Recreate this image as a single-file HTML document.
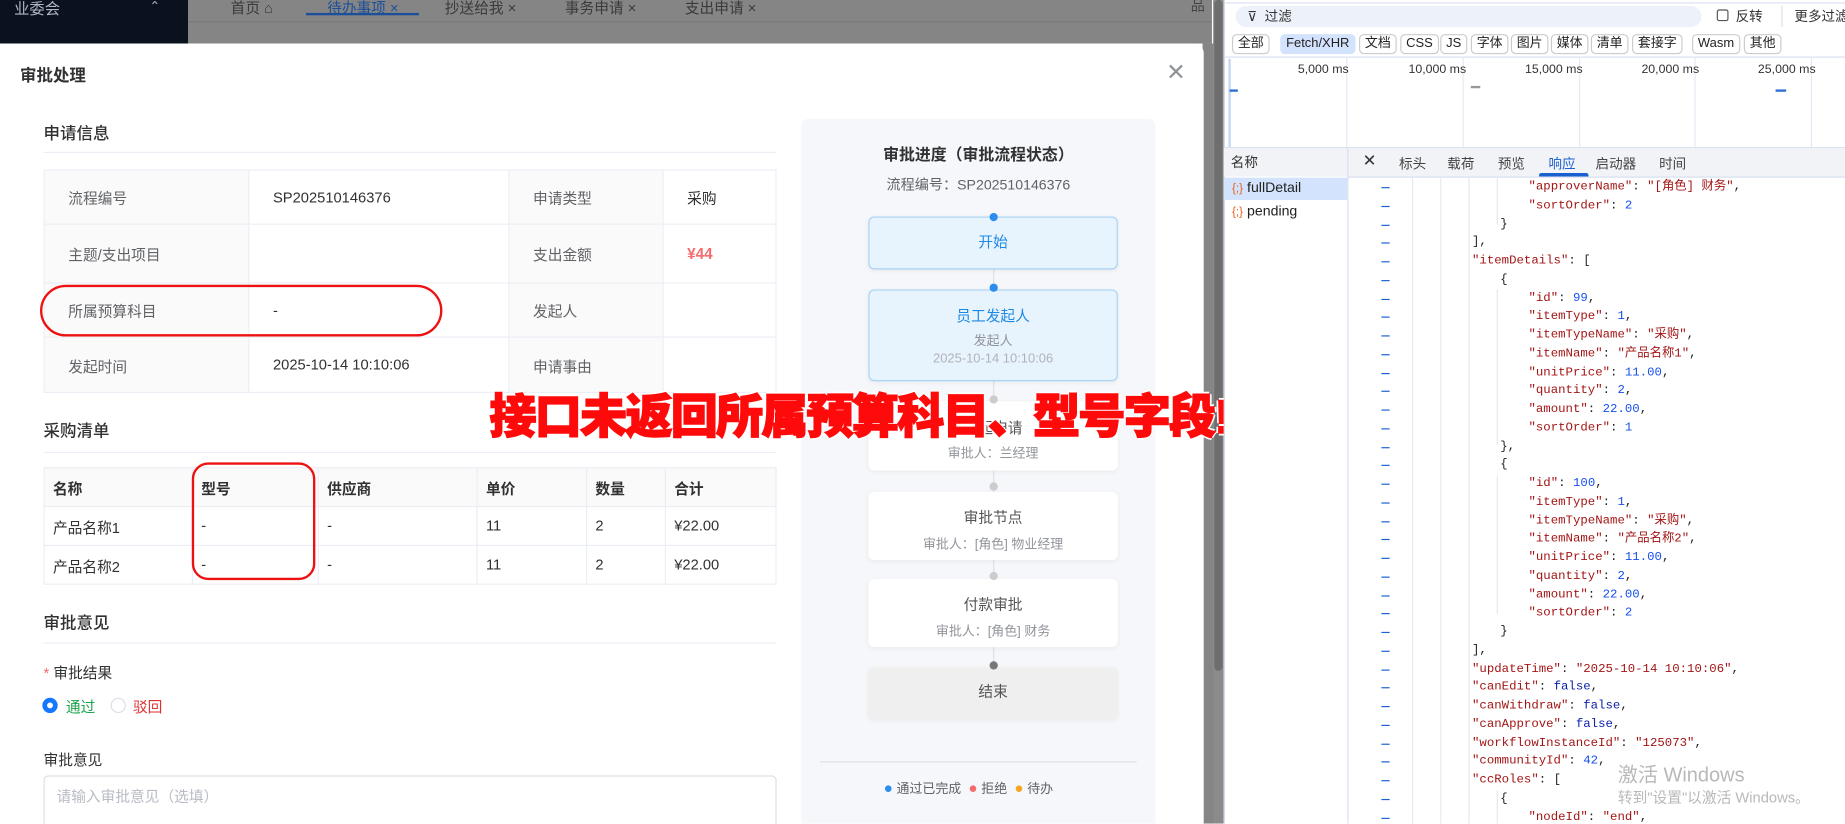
<!DOCTYPE html>
<html><head><meta charset="utf-8">
<style>
*{margin:0;padding:0;box-sizing:border-box}
html,body{width:1845px;height:824px;overflow:hidden;background:#fff}
#r{position:absolute;left:0;top:0;width:1568px;height:700px;transform:scale(1.17666);transform-origin:0 0;font-family:"Liberation Sans","Noto Sans CJK SC",sans-serif;color:#303133;font-size:13px;overflow:hidden}
.a{position:absolute;white-space:nowrap}
.t{font-size:14px;font-weight:500;color:#303133}
.hl{position:absolute;height:1px;background:#ebeef5}
table{border-collapse:collapse;position:absolute;font-size:12.5px}
td{border:1px solid #ebeef5;padding:0 0 0 20px;color:#303133}
td.l{background:#fafafa;color:#606266}
.tb td{padding-left:7px}
.node{position:absolute;left:738px;width:212px;background:#fff;border-radius:5px;text-align:center;box-shadow:0 1px 4px rgba(0,0,0,.06)}
.dot{position:absolute;left:841px;width:7px;height:7px;border-radius:50%;background:#ccc}
.js{position:absolute;left:1160px;font-family:"Liberation Mono","Noto Sans CJK SC",monospace;font-size:10.5px;line-height:14px;height:14px;color:#222}
.k{color:#a31515}.n{color:#1750eb}.b{color:#0d22aa}
.ln{position:absolute;left:1174px;width:7px;height:1px;background:#1a5fd0}
.btn{position:absolute;top:29px;height:17px;border:1px solid #ccc;border-radius:4px;font-size:11px;padding:0 4px;line-height:15px;color:#222}
</style></head><body><div id="r">
<div class="a" style="left:0;top:0;width:160px;height:37px;background:#0a1220"></div>
<div class="a" style="left:12px;top:-3px;color:#b0b6c0;font-size:13px">业委会</div>
<div class="a" style="left:127px;top:-1px;color:#aaa;font-size:11px">⌃</div>
<div class="a" style="left:160px;top:0;width:870px;height:37px;background:#858585"></div>
<div class="a" style="left:160px;top:18px;width:870px;height:1px;background:#7a7a7a"></div>
<div class="a" style="left:196px;top:-4px;color:#3a3a3a;font-size:12.5px">首页 ⌂</div>
<div class="a" style="left:278px;top:-4px;color:#1b4f9a;font-size:12.5px">待办事项 ×</div>
<div class="a" style="left:260px;top:11px;width:96px;height:2px;background:#1b4f9a"></div>
<div class="a" style="left:378px;top:-4px;color:#3a3a3a;font-size:12.5px">抄送给我 ×</div>
<div class="a" style="left:480px;top:-4px;color:#3a3a3a;font-size:12.5px">事务申请 ×</div>
<div class="a" style="left:582px;top:-4px;color:#3a3a3a;font-size:12.5px">支出申请 ×</div>
<div class="a" style="left:1012px;top:-4px;color:#444;font-size:12px">品</div>
<div class="a" style="left:1022px;top:37px;width:10px;height:663px;background:#858585"></div>
<div class="a" style="left:1031px;top:0;width:9px;height:700px;background:#8b8b8b"></div>
<div class="a" style="left:1032px;top:0;width:7px;height:570px;background:#6e6e6e;border-radius:4px"></div>
<div class="a" style="left:0;top:37px;width:1023px;height:663px;background:#fff;border-radius:0 8px 0 0"></div>
<div class="a" style="left:17px;top:54px;font-size:14px;font-weight:bold">审批处理</div>
<div class="a" style="left:991px;top:49px;font-size:20px;color:#909399;font-weight:300">✕</div>
<div class="a t" style="left:37px;top:103px">申请信息</div>
<div class="hl" style="left:37px;top:129px;width:623px"></div>
<table style="left:37px;top:144px;width:623px;height:189px">
<tr style="height:46px"><td class="l" style="width:174px">流程编号</td><td style="width:221px">SP202510146376</td><td class="l" style="width:131px">申请类型</td><td>采购</td></tr>
<tr style="height:50px"><td class="l">主题/支出项目</td><td></td><td class="l">支出金额</td><td style="color:#f56c6c;font-weight:bold;font-size:13px">¥44</td></tr>
<tr style="height:46px"><td class="l">所属预算科目</td><td>-</td><td class="l">发起人</td><td></td></tr>
<tr style="height:47px"><td class="l">发起时间</td><td>2025-10-14 10:10:06</td><td class="l">申请事由</td><td></td></tr>
</table>
<div class="a" style="left:34px;top:242px;width:342px;height:44px;border:2px solid #ee1111;border-radius:22px"></div>
<div class="a t" style="left:37px;top:356px">采购清单</div>
<div class="hl" style="left:37px;top:384px;width:623px"></div>
<table class="tb" style="left:37px;top:397px;width:623px;height:99px">
<tr style="height:33px;font-weight:bold;background:#fafafa"><td style="width:126px">名称</td><td style="width:107px">型号</td><td style="width:135px">供应商</td><td style="width:93px">单价</td><td style="width:67px">数量</td><td>合计</td></tr>
<tr style="height:33px"><td>产品名称1</td><td>-</td><td>-</td><td>11</td><td>2</td><td>¥22.00</td></tr>
<tr style="height:33px"><td>产品名称2</td><td>-</td><td>-</td><td>11</td><td>2</td><td>¥22.00</td></tr>
</table>
<div class="a" style="left:163px;top:393px;width:105px;height:100px;border:2px solid #ee1111;border-radius:14px"></div>
<div class="a t" style="left:37px;top:519px">审批意见</div>
<div class="hl" style="left:37px;top:546px;width:623px"></div>
<div class="a" style="left:37px;top:561px;font-size:12.5px"><span style="color:#f56c6c">*</span> 审批结果</div>
<div class="a" style="left:36px;top:593px;width:13px;height:13px;border-radius:50%;border:4px solid #1677ff"></div>
<div class="a" style="left:56px;top:590px;color:#1aa34a;font-size:12.5px">通过</div>
<div class="a" style="left:94px;top:593px;width:13px;height:13px;border-radius:50%;border:1px solid #dcdfe6"></div>
<div class="a" style="left:113px;top:590px;color:#e03030;font-size:12.5px">驳回</div>
<div class="a" style="left:37px;top:635px;font-size:12.5px">审批意见</div>
<div class="a" style="left:37px;top:659px;width:623px;height:50px;border:1px solid #dcdfe6;border-radius:4px"></div>
<div class="a" style="left:48px;top:666px;color:#b8bcc4;font-size:12.5px">请输入审批意见（选填）</div>
<div class="a" style="left:681px;top:101px;width:301px;height:610px;background:#f5f7fa;border-radius:6px"></div>
<div class="a" style="left:681px;top:120px;width:301px;text-align:center;font-size:13.5px;font-weight:bold">审批进度（审批流程状态）</div>
<div class="a" style="left:681px;top:148px;width:301px;text-align:center;font-size:12px;color:#606266">流程编号：SP202510146376</div>
<div class="a" style="left:844px;top:186px;width:1px;height:385px;background:#dcdfe6"></div>
<div class="node" style="top:184px;height:45px;background:#e8f4fd;border:1px solid #a8d4f5;line-height:43px;color:#1e88e5;font-size:12.5px">开始</div>
<div class="dot" style="top:181px;background:#2d8cf0"></div>
<div class="node" style="top:246px;height:78px;background:#e8f4fd;border:1px solid #a8d4f5"><div style="color:#1e88e5;margin-top:11px;font-size:12.5px">员工发起人</div><div style="color:#909399;font-size:11px;margin-top:4px">发起人</div><div style="color:#b0b3b8;font-size:11px;margin-top:2px">2025-10-14 10:10:06</div></div>
<div class="dot" style="top:241px;background:#2d8cf0"></div>
<div class="node" style="top:341px;height:59px"><div style="margin-top:12px;font-size:12.5px;color:#555">发起申请</div><div style="color:#909399;font-size:11px;margin-top:5px">审批人：兰经理</div></div>
<div class="dot" style="top:336px"></div>
<div class="node" style="top:418px;height:58px"><div style="margin-top:11px;font-size:12.5px;color:#555">审批节点</div><div style="color:#909399;font-size:11px;margin-top:6px">审批人：[角色] 物业经理</div></div>
<div class="dot" style="top:410px"></div>
<div class="node" style="top:492px;height:58px"><div style="margin-top:11px;font-size:12.5px;color:#555">付款审批</div><div style="color:#909399;font-size:11px;margin-top:6px">审批人：[角色] 财务</div></div>
<div class="dot" style="top:486px"></div>
<div class="node" style="top:567px;height:44px;background:#efefef;line-height:42px;font-size:12.5px;color:#555">结束</div>
<div class="dot" style="top:562px;background:#777"></div>
<div class="a" style="left:697px;top:647px;width:269px;height:1px;background:#dcdfe6"></div>
<div class="a" style="left:751px;top:662px;font-size:11px;color:#606266"><span style="color:#2d8cf0;font-size:13px">●</span> 通过已完成 &nbsp;<span style="color:#f56c6c;font-size:13px">●</span> 拒绝 &nbsp;<span style="color:#f5a623;font-size:13px">●</span> 待办</div>
<div class="a" style="left:416px;top:327px;font-size:40px;line-height:56px;font-weight:900;color:#ff0a0a;letter-spacing:-1.5px;-webkit-text-stroke:1.2px #ff0a0a;text-shadow:2px 0 #fff,-2px 0 #fff,0 2px #fff,0 -2px #fff">接口未返回所属预算科目、型号字段!</div>
<div class="a" style="left:1040px;top:0;width:528px;height:700px;background:#fff;border-left:1px solid #d0d7e5"></div>
<div class="a" style="left:1040px;top:2px;width:528px;height:1px;background:#d8e0f0"></div>
<div class="a" style="left:1050px;top:5px;width:396px;height:18px;background:#edf1f9;border-radius:9px"></div>
<div class="a" style="left:1060px;top:6px;font-size:11.5px;color:#333">⊽ &nbsp;过滤</div>
<div class="a" style="left:1459px;top:8px;width:10px;height:10px;border:1px solid #555;border-radius:2px"></div>
<div class="a" style="left:1475px;top:6px;font-size:11.5px;color:#333">反转</div>
<div class="a" style="left:1514px;top:5px;width:1px;height:18px;background:#ddd"></div>
<div class="a" style="left:1525px;top:6px;font-size:11.5px;color:#333">更多过滤</div>
<div class="btn" style="left:1047px">全部</div>
<div class="btn" style="left:1088px;background:#d3e3fd;border-color:#d3e3fd">Fetch/XHR</div>
<div class="btn" style="left:1155px">文档</div>
<div class="btn" style="left:1190px">CSS</div>
<div class="btn" style="left:1224px">JS</div>
<div class="btn" style="left:1250px">字体</div>
<div class="btn" style="left:1284px">图片</div>
<div class="btn" style="left:1318px">媒体</div>
<div class="btn" style="left:1352px">清单</div>
<div class="btn" style="left:1387px">套接字</div>
<div class="btn" style="left:1438px">Wasm</div>
<div class="btn" style="left:1482px">其他</div>
<div class="a" style="left:1040px;top:48px;width:528px;height:1px;background:#d8e0f0"></div>
<div class="a" style="left:1144px;top:48px;width:1px;height:78px;background:#e3e8f2"></div>
<div class="a" style="left:1243px;top:48px;width:1px;height:78px;background:#e3e8f2"></div>
<div class="a" style="left:1342px;top:48px;width:1px;height:78px;background:#e3e8f2"></div>
<div class="a" style="left:1440px;top:48px;width:1px;height:78px;background:#e3e8f2"></div>
<div class="a" style="left:1539px;top:48px;width:1px;height:78px;background:#e3e8f2"></div>
<div class="a" style="left:1103px;top:53px;font-size:10.5px;color:#333">5,000 ms</div>
<div class="a" style="left:1197px;top:53px;font-size:10.5px;color:#333">10,000 ms</div>
<div class="a" style="left:1296px;top:53px;font-size:10.5px;color:#333">15,000 ms</div>
<div class="a" style="left:1395px;top:53px;font-size:10.5px;color:#333">20,000 ms</div>
<div class="a" style="left:1494px;top:53px;font-size:10.5px;color:#333">25,000 ms</div>
<div class="a" style="left:1044px;top:50px;width:2px;height:75px;background:#c6d6f4"></div>
<div class="a" style="left:1045px;top:76px;width:7px;height:2px;background:#2d6fd6"></div>
<div class="a" style="left:1250px;top:73px;width:8px;height:2px;background:#999"></div>
<div class="a" style="left:1509px;top:76px;width:9px;height:2px;background:#2d6fd6"></div>
<div class="a" style="left:1040px;top:125px;width:528px;height:1px;background:#d8e0f0"></div>
<div class="a" style="left:1040px;top:126px;width:106px;height:24px;background:#f1f3f7"></div>
<div class="a" style="left:1046px;top:130px;font-size:11.5px;color:#333">名称</div>
<div class="a" style="left:1145px;top:126px;width:423px;height:25px;background:#f1f3f7;border-bottom:1px solid #d8e0f0"></div>
<div class="a" style="left:1145px;top:126px;width:1px;height:574px;background:#d8e0f0"></div>
<div class="a" style="left:1158px;top:128px;font-size:14px;color:#333">✕</div>
<div class="a" style="left:1189px;top:131px;font-size:11.5px;color:#444">标头</div>
<div class="a" style="left:1230px;top:131px;font-size:11.5px;color:#444">载荷</div>
<div class="a" style="left:1273px;top:131px;font-size:11.5px;color:#444">预览</div>
<div class="a" style="left:1316px;top:131px;font-size:11.5px;color:#1a5fd0">响应</div>
<div class="a" style="left:1308px;top:147px;width:42px;height:3px;background:#1a5fd0;border-radius:2px 2px 0 0"></div>
<div class="a" style="left:1356px;top:131px;font-size:11.5px;color:#444">启动器</div>
<div class="a" style="left:1410px;top:131px;font-size:11.5px;color:#444">时间</div>
<div class="a" style="left:1040px;top:151px;width:105px;height:19px;background:#d3e3fd"></div>
<div class="a" style="left:1047px;top:152px;font-size:12px;color:#222"><span style="color:#e8631a;font-size:10px">{;}</span> fullDetail</div>
<div class="a" style="left:1047px;top:172px;font-size:12px;color:#222"><span style="color:#e8631a;font-size:10px">{;}</span> pending</div>
<div class="a" style="left:1200px;top:151px;width:1px;height:549px;background:#e3e8f2"></div>
<div class="a" style="left:1224px;top:151px;width:1px;height:549px;background:#e3e8f2"></div>
<div class="a" style="left:1248px;top:151px;width:1px;height:549px;background:#e3e8f2"></div>
<div class="a" style="left:1272px;top:151px;width:1px;height:40px;background:#e3e8f2"></div>
<div class="a" style="left:1272px;top:246px;width:1px;height:132px;background:#e3e8f2"></div>
<div class="a" style="left:1272px;top:404px;width:1px;height:118px;background:#e3e8f2"></div>
<div class="a" style="left:1272px;top:672px;width:1px;height:28px;background:#e3e8f2"></div>
<div id="js"></div>
<div class="a" style="left:1375px;top:644px;font-size:17px;color:#b8b8b8">激活 Windows</div>
<div class="a" style="left:1375px;top:667px;font-size:12.5px;color:#b8b8b8">转到"设置"以激活 Windows。</div>
<script>
var L=[
[2,'<span class=k>"approverName"</span>: <span class=k>"[角色] 财务"</span>,'],
[2,'<span class=k>"sortOrder"</span>: <span class=n>2</span>'],
[1,'}'],[0,'],'],
[0,'<span class=k>"itemDetails"</span>: ['],
[1,'{'],
[2,'<span class=k>"id"</span>: <span class=n>99</span>,'],
[2,'<span class=k>"itemType"</span>: <span class=n>1</span>,'],
[2,'<span class=k>"itemTypeName"</span>: <span class=k>"采购"</span>,'],
[2,'<span class=k>"itemName"</span>: <span class=k>"产品名称1"</span>,'],
[2,'<span class=k>"unitPrice"</span>: <span class=n>11.00</span>,'],
[2,'<span class=k>"quantity"</span>: <span class=n>2</span>,'],
[2,'<span class=k>"amount"</span>: <span class=n>22.00</span>,'],
[2,'<span class=k>"sortOrder"</span>: <span class=n>1</span>'],
[1,'},'],[1,'{'],
[2,'<span class=k>"id"</span>: <span class=n>100</span>,'],
[2,'<span class=k>"itemType"</span>: <span class=n>1</span>,'],
[2,'<span class=k>"itemTypeName"</span>: <span class=k>"采购"</span>,'],
[2,'<span class=k>"itemName"</span>: <span class=k>"产品名称2"</span>,'],
[2,'<span class=k>"unitPrice"</span>: <span class=n>11.00</span>,'],
[2,'<span class=k>"quantity"</span>: <span class=n>2</span>,'],
[2,'<span class=k>"amount"</span>: <span class=n>22.00</span>,'],
[2,'<span class=k>"sortOrder"</span>: <span class=n>2</span>'],
[1,'}'],[0,'],'],
[0,'<span class=k>"updateTime"</span>: <span class=k>"2025-10-14 10:10:06"</span>,'],
[0,'<span class=k>"canEdit"</span>: <span class=b>false</span>,'],
[0,'<span class=k>"canWithdraw"</span>: <span class=b>false</span>,'],
[0,'<span class=k>"canApprove"</span>: <span class=b>false</span>,'],
[0,'<span class=k>"workflowInstanceId"</span>: <span class=k>"125073"</span>,'],
[0,'<span class=k>"communityId"</span>: <span class=n>42</span>,'],
[0,'<span class=k>"ccRoles"</span>: ['],
[1,'{'],
[2,'<span class=k>"nodeId"</span>: <span class=k>"end"</span>,']
];
var h='';
for(var i=0;i<L.length;i++){var y=152+i*15.75;
h+='<div class="ln" style="top:'+(y+7)+'px"></div><div class="js" style="top:'+y+'px;left:'+(1251+L[i][0]*24)+'px">'+L[i][1]+'</div>';}
document.getElementById('js').outerHTML=h;
</script>
</div></body></html>
